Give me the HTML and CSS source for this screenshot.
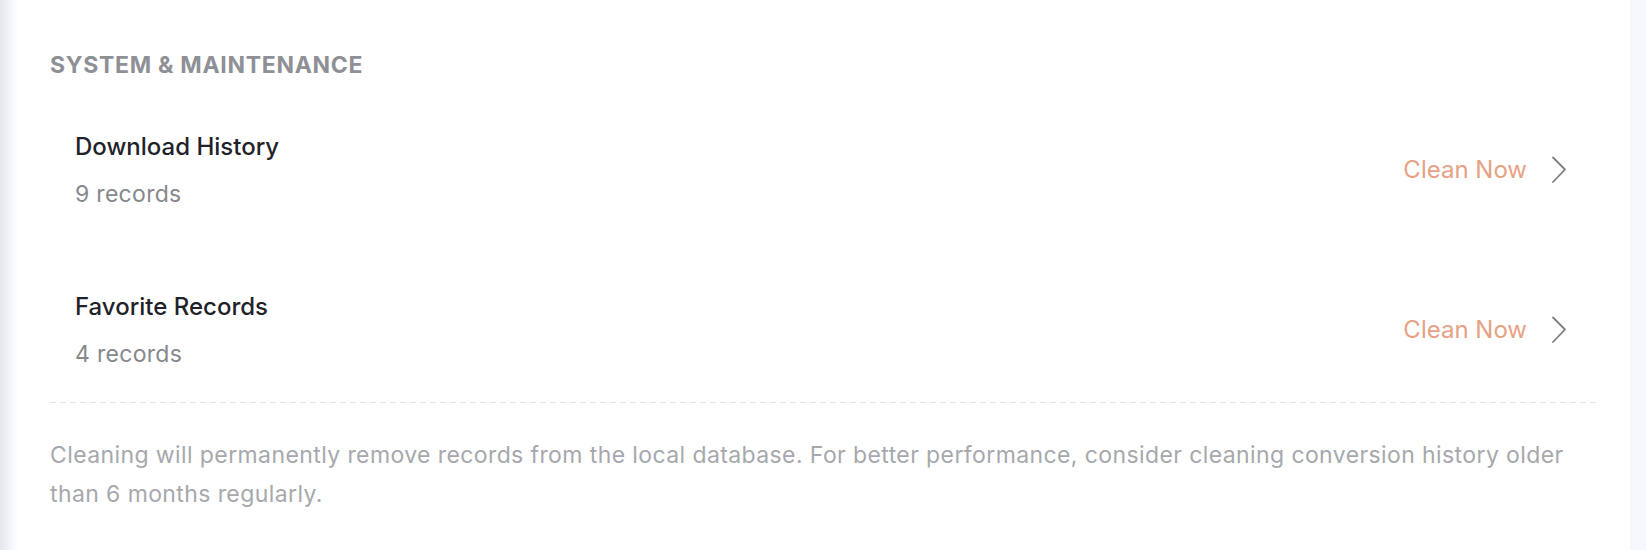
FILE: index.html
```html
<!DOCTYPE html>
<html lang="en">
<head>
<meta charset="utf-8">
<title>System &amp; Maintenance</title>
<link rel="stylesheet" href="styles.css">
</head>
<body>
<div class="page">
  <div class="edge"></div>
  <section class="card">
    <h2 class="section-title">System &amp; Maintenance</h2>
    <div class="rows">
      <div class="row">
        <div class="info">
          <div class="info-title">Download History</div>
          <div class="info-sub">9 records</div>
        </div>
        <div class="action">
          <span class="action-text">Clean Now</span>
          <svg class="chev" width="16" height="28" viewBox="0 0 16 28"><path d="M2 1.5 L14 13.5 L2 26" fill="none" stroke="#7d7d7d" stroke-width="1.8" stroke-linecap="round" stroke-linejoin="round"/></svg>
        </div>
      </div>
      <div class="row">
        <div class="info">
          <div class="info-title">Favorite Records</div>
          <div class="info-sub">4 records</div>
        </div>
        <div class="action">
          <span class="action-text">Clean Now</span>
          <svg class="chev" width="16" height="28" viewBox="0 0 16 28"><path d="M2 1.5 L14 13.5 L2 26" fill="none" stroke="#7d7d7d" stroke-width="1.8" stroke-linecap="round" stroke-linejoin="round"/></svg>
        </div>
      </div>
    </div>
    <div class="divider"></div>
    <p class="note">Cleaning will permanently remove records from the local database. For better performance, consider cleaning conversion history older than 6 months regularly.</p>
  </section>
</div>
</body>
</html>
```

FILE: styles.css
```css
html, body {
  margin: 0;
  padding: 0;
}
body {
  background: #f5f8fc;
  font-family: Inter, "Noto Sans", "Liberation Sans", sans-serif;
  width: 1646px;
  height: 550px;
  overflow: hidden;
}
.page {
  display: flex;
  height: 550px;
}
.edge {
  width: 17px;
  flex: none;
  background: linear-gradient(to right, #e3e7ee, #f3f5f9 60%, #fdfdfe);
}
.card {
  width: 1613px;
  flex: none;
  box-sizing: border-box;
  background: #ffffff;
  padding: 49px 32px 0 33px;
}
.section-title {
  margin: 0 0 49px;
  font-size: 23px;
  line-height: 32px;
  font-weight: 700;
  text-transform: uppercase;
  color: #8e9095;
  letter-spacing: 0.7px;
}
.rows {
  display: flex;
  flex-direction: column;
  gap: 80px;
}
.row {
  display: flex;
  align-items: center;
  justify-content: space-between;
  padding: 0 31px 0 25px;
}
.info-title {
  font-size: 24px;
  line-height: 34px;
  font-weight: 500;
  color: #1f2329;
}
.info-sub {
  margin-top: 14px;
  font-size: 23px;
  line-height: 32px;
  color: #86888d;
  letter-spacing: 0.3px;
}
.action {
  display: flex;
  align-items: center;
  gap: 24px;
}
.action-text {
  font-size: 24px;
  line-height: 34px;
  color: #e6a283;
}
.chev {
  display: block;
}
.divider {
  margin-top: 32px;
  height: 1px;
  background: repeating-linear-gradient(to right, #e2e3e6 0 6px, transparent 6px 10px);
}
.note {
  margin: 33px 0 0;
  font-size: 23px;
  line-height: 39px;
  color: #a6a8ad;
  letter-spacing: 0.4px;
}
```
